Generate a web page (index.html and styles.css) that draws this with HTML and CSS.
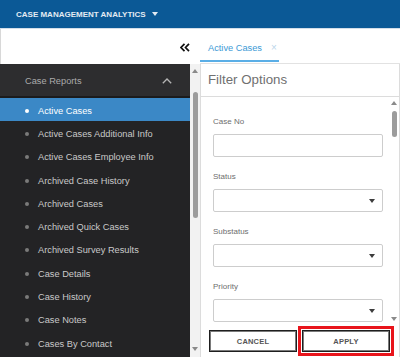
FILE: index.html
```html
<!DOCTYPE html>
<html lang="en">
<head>
  <meta charset="UTF-8">
  <meta name="viewport" content="width=device-width, initial-scale=1.0">
  <title>Case Management Analytics</title>
  <link rel="stylesheet" href="styles.css">
</head>
<body>

  <header class="topbar">
    <span class="app-title">CASE MANAGEMENT ANALYTICS</span>
    <span class="title-caret"></span>
  </header>

  <div class="tabbar">
    <div class="tab-left">
      <svg class="collapse-icon" width="10" height="9" viewBox="0 0 10 9">
        <polyline points="4.5,0.8 1,4.5 4.5,8.2" fill="none" stroke="#111" stroke-width="1.7"/>
        <polyline points="9,0.8 5.5,4.5 9,8.2" fill="none" stroke="#111" stroke-width="1.7"/>
      </svg>
    </div>
    <div class="tab-strip">
      <div class="tab active">Active Cases<span class="tab-close">&times;</span></div>
    </div>
  </div>

  <div class="main">
    <aside class="sidebar">
      <div class="side-head">
        <span>Case Reports</span>
        <svg width="10" height="6" viewBox="0 0 10 6">
          <polyline points="0.8,5.3 5,1 9.2,5.3" fill="none" stroke="#b5b5b5" stroke-width="1.3"/>
        </svg>
      </div>
      <ul class="report-list">
        <li class="active">Active Cases</li>
        <li>Active Cases Additional Info</li>
        <li>Active Cases Employee Info</li>
        <li>Archived Case History</li>
        <li>Archived Cases</li>
        <li>Archived Quick Cases</li>
        <li>Archived Survey Results</li>
        <li>Case Details</li>
        <li>Case History</li>
        <li>Case Notes</li>
        <li>Cases By Contact</li>
      </ul>
    </aside>

    <div class="scrollbar side-scroll">
      <span class="arrow-up"></span>
      <span class="thumb"></span>
      <span class="arrow-down"></span>
    </div>

    <section class="panel">
      <div class="panel-head">Filter Options</div>
      <div class="panel-body">
        <div class="filters">
          <div class="field">
            <label>Case No</label>
            <div class="box"></div>
          </div>
          <div class="field">
            <label>Status</label>
            <div class="box select"><span class="select-caret"></span></div>
          </div>
          <div class="field">
            <label>Substatus</label>
            <div class="box select"><span class="select-caret"></span></div>
          </div>
          <div class="field">
            <label>Priority</label>
            <div class="box select"><span class="select-caret"></span></div>
          </div>
        </div>
        <div class="scrollbar form-scroll">
          <span class="arrow-up"></span>
          <span class="thumb"></span>
          <span class="arrow-down"></span>
        </div>
      </div>
      <div class="actions">
        <button class="btn">CANCEL</button>
        <button class="btn highlighted">APPLY</button>
      </div>
    </section>
  </div>

</body>
</html>
```

FILE: styles.css
```css
body {
  margin: 0;
  width: 400px;
  height: 357px;
  overflow: hidden;
  font-family: "Liberation Sans", Arial, sans-serif;
  background-color: #fff;
}

/* top blue bar */
.topbar {
  height: 28px;
  background-color: #0b5996;
  border-bottom: 1px solid #d3dee9;
  display: flex;
  align-items: center;
  padding-left: 16px;
}

.app-title {
  color: #e3ebf3;
  font-size: 8px;
  font-weight: bold;
}

.title-caret {
  margin-left: 6px;
  border-left: 3px solid transparent;
  border-right: 3px solid transparent;
  border-top: 4px solid #e3ebf3;
}

/* tab row */
.tabbar {
  display: flex;
  height: 35px;
  border-left: 1px solid #d8d8d8;
}

.tab-left {
  width: 199px;
  display: flex;
  justify-content: flex-end;
  padding-right: 10px;
  box-sizing: border-box;
}

.collapse-icon {
  margin-top: 14px;
}

.tab-strip {
  flex: 1;
  border-bottom: 1px solid #e2e2e2;
}

.tab {
  display: inline-block;
  padding: 11px 2px 3.5px 8px;
  line-height: 16px;
  font-size: 9.25px;
}

.tab.active {
  color: #3d9ad6;
  border-bottom: 2px solid #5aaee6;
}

.tab-close {
  margin-left: 9px;
  color: #bcd6ea;
  font-size: 10px;
}

/* main area */
.main {
  display: flex;
  height: 293px;
}

.sidebar {
  width: 190px;
  background-color: #232325;
}

.side-head {
  height: 32px;
  background-color: #2d2d2f;
  border-bottom: 2px solid #1b1b1c;
  display: flex;
  align-items: center;
  justify-content: space-between;
  padding: 1px 18px 0 25px;
  box-sizing: border-box;
  height: 34px;
  color: #ababab;
  font-size: 9.25px;
}

.report-list {
  list-style: none;
  margin: 0;
  padding: 0;
}

.report-list li {
  height: 23.3px;
  box-sizing: border-box;
  display: flex;
  align-items: center;
  padding: 2px 0 0 25px;
  color: #c9c9c9;
  font-size: 9.25px;
}

.report-list li::before {
  content: "";
  width: 4px;
  height: 4px;
  border-radius: 50%;
  background-color: #7a7a7a;
  margin-right: 9px;
}

.report-list li.active {
  background-color: #3b88c6;
  color: #fff;
}

.report-list li.active::before {
  background-color: #fff;
}

/* fake scrollbars */
.scrollbar {
  display: flex;
  flex-direction: column;
  align-items: center;
}

.arrow-up {
  border-left: 3px solid transparent;
  border-right: 3px solid transparent;
  border-bottom: 4px solid #8a8a8a;
}

.arrow-down {
  border-left: 3px solid transparent;
  border-right: 3px solid transparent;
  border-top: 4px solid #8a8a8a;
}

.thumb {
  width: 5px;
  border-radius: 3px;
  background-color: #9c9c9c;
}

.side-scroll {
  width: 10px;
  background-color: #f2f2f2;
}

.side-scroll .arrow-up {
  margin-top: 5px;
}

.side-scroll .thumb {
  margin-top: 19px;
  height: 126px;
}

.side-scroll .arrow-down {
  margin-top: auto;
  margin-bottom: 6px;
}

/* filter panel */
.panel {
  flex: 1;
  display: flex;
  flex-direction: column;
  border-left: 1px solid #dcdcdc;
  border-right: 1px solid #dcdcdc;
}

.panel-head {
  height: 32px;
  line-height: 31px;
  padding-left: 7px;
  border-bottom: 1px solid #dcdcdc;
  color: #707070;
  font-size: 13.3px;
}

.panel-body {
  flex: 1;
  display: flex;
  overflow: hidden;
}

.filters {
  flex: 1;
  padding: 20px 7px 0 12px;
}

.field {
  margin-bottom: 15px;
}

.field label {
  display: block;
  height: 10px;
  line-height: 10px;
  margin-bottom: 7px;
  color: #6e6e6e;
  font-size: 8px;
}

.box {
  height: 23px;
  box-sizing: border-box;
  border: 1px solid #cdcdcd;
  border-radius: 2px;
}

.select {
  display: flex;
  align-items: center;
  justify-content: flex-end;
  padding-right: 7px;
}

.select-caret {
  border-left: 3px solid transparent;
  border-right: 3px solid transparent;
  border-top: 4px solid #3c3c3c;
}

.form-scroll {
  width: 8px;
  margin-right: 1px;
}

.form-scroll .arrow-up {
  margin-top: 4px;
}

.form-scroll .thumb {
  margin-top: 6px;
  height: 26px;
}

.form-scroll .arrow-down {
  margin-top: auto;
  margin-bottom: 5px;
}

/* buttons */
.actions {
  display: flex;
  gap: 5px;
  padding: 4px 0 5px 8px;
}

.btn {
  width: 88px;
  height: 22px;
  padding: 0;
  background-color: #fff;
  border: 1px solid #1e1e1e;
  box-shadow: inset 0 0 0 1px #7a7a7a;
  font-family: "Liberation Sans", Arial, sans-serif;
  font-size: 7.5px;
  font-weight: bold;
  letter-spacing: 0.2px;
  color: #555;
}

.btn.highlighted {
  outline: 3px solid #e8141b;
  outline-offset: 1px;
}
```
